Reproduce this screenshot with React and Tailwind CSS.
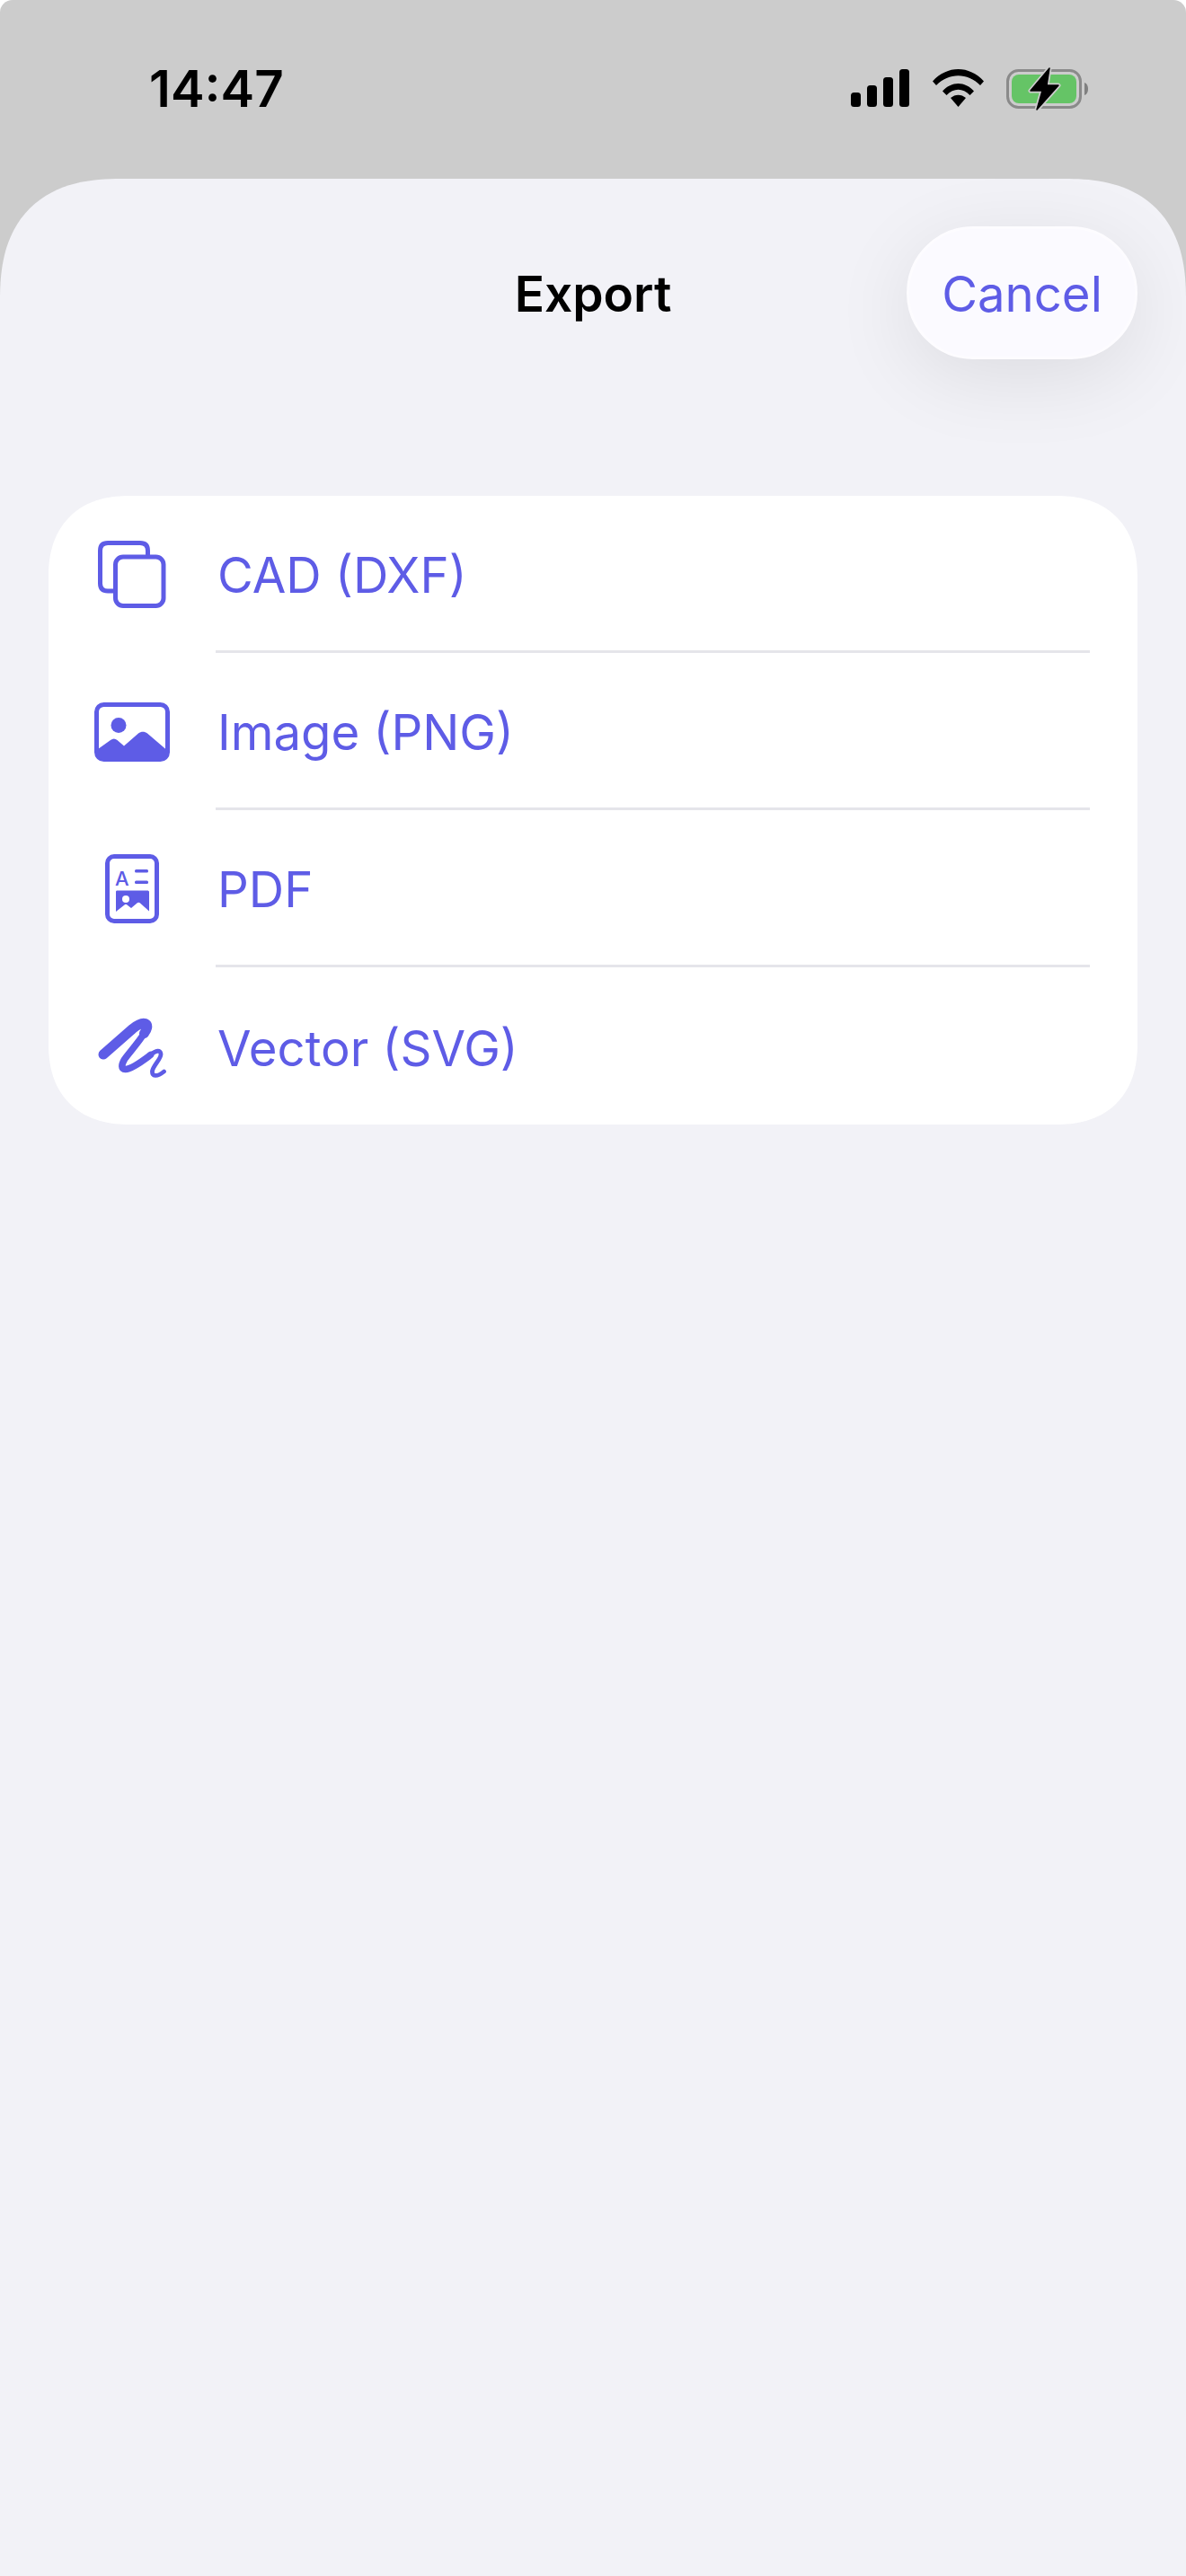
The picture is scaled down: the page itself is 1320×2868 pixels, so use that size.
const INK = "#5e5ce6";

function Signal() {
  return (
    <svg width="66" height="42" viewBox="0 0 66 42" className="block">
      <rect x="0" y="26" width="11" height="16" rx="3.5" fill="#000" />
      <rect x="18" y="18" width="11" height="24" rx="3.5" fill="#000" />
      <rect x="36" y="9" width="11" height="33" rx="3.5" fill="#000" />
      <rect x="54" y="0" width="11" height="42" rx="3.5" fill="#000" />
    </svg>
  );
}

function Wifi() {
  return (
    <svg width="57" height="42" viewBox="0 0 57 42" className="block">
      <path d="M0 13.5 C16 -4.5 41 -4.5 57 13.5 L53 18 C39 3.5 18 3.5 4 18 Z" fill="#000" />
      <path d="M11 24.5 C21 13 36 13 46 24.5 L41.5 29 C33.5 20.5 23.5 20.5 15.5 29 Z" fill="#000" />
      <path d="M20 32 C25 27.5 32 27.5 37 32 L28.5 42 Z" fill="#000" />
    </svg>
  );
}

function Battery() {
  return (
    <svg width="92" height="48" viewBox="0 0 92 48" className="block">
      <rect x="1.5" y="3.5" width="81" height="41" rx="12" fill="none" stroke="#8a8a8a" strokeWidth="3" />
      <rect x="6" y="8" width="72" height="32" rx="8" fill="#65c466" />
      <path d="M87 17 C90 18 91 21 91 24 C91 27 90 30 87 31 Z" fill="#808080" />
      <path d="M48 1 L27 26 L40 26 L34 47 L58 20 L45 20 Z" fill="#000" stroke="#cccccc" strokeWidth="5" strokeLinejoin="round" paintOrder="stroke" />
      <path d="M48 1 L27 26 L40 26 L34 47 L58 20 L45 20 Z" fill="#000" stroke="#000" strokeWidth="1.5" strokeLinejoin="round" />
    </svg>
  );
}

function CopyIcon() {
  return (
    <svg width="76" height="76" viewBox="0 0 76 76" className="block">
      <path d="M17 56 H11 C5.500 56 2.500 53 2.500 47.500 V11 C2.500 5.500 5.500 2.500 11 2.500 H47 C52.500 2.500 55.500 5.500 55.500 11 V16.500" fill="none" stroke={INK} strokeWidth="5" />
      <rect x="19.500" y="18" width="53.500" height="54.500" rx="8.500" fill="none" stroke={INK} strokeWidth="5" />
    </svg>
  );
}

function ImageIcon() {
  return (
    <svg width="84" height="66" viewBox="0 0 84 66" className="block">
      <rect x="2.500" y="2.500" width="79" height="61" rx="8" fill="none" stroke={INK} strokeWidth="5" />
      <circle cx="27" cy="25.500" r="8.500" fill={INK} />
      <path d="M4 52 L18 42 C20.500 40 23 40 25.500 42 L33 48.500 L49 34.500 C52 32 56 32 59 34.500 L80 52.500 V58 C80 61 78 63 75 63 H9 C6 63 4 61 4 58 Z" fill={INK} />
    </svg>
  );
}

function DocIcon() {
  return (
    <svg width="60" height="78" viewBox="0 0 60 78" className="block">
      <rect x="2.500" y="2.500" width="55" height="72" rx="7.500" fill="none" stroke={INK} strokeWidth="5" />
      <text x="11" y="35" fontFamily="Inter, sans-serif" fontSize="22" fontWeight="500" fill={INK}>A</text>
      <rect x="33" y="17" width="15" height="3.500" rx="1.500" fill={INK} />
      <rect x="33" y="29.500" width="15" height="3.500" rx="1.500" fill={INK} />
      <path d="M12 42 C12 41 12.500 40.500 13.500 40.500 H47 C48 40.500 49 41 49 42 V63.500 L39 54.500 C38 53.500 36.500 53.500 35.500 54.500 L29 60 L24.500 56.500 C23.500 55.500 22.500 55.500 21.500 56.500 L12 64 Z" fill={INK} />
      <circle cx="23" cy="50" r="4" fill="#fff" />
    </svg>
  );
}

function SquiggleIcon() {
  return (
    <svg width="78" height="70" viewBox="-1.5 -2.500 78 70" className="block">
      <path d="M5.500 41.500 L38 13 C44 8 49 6 52 7 C56 9 54 14 51 18" fill="none" stroke={INK} strokeWidth="11" strokeLinecap="round" strokeLinejoin="round" />
      <path d="M51 18 C44 29 33 41 29 47 C25.500 53 25 58 30 58 C38 57.500 50 48 58 42" fill="none" stroke={INK} strokeWidth="7.500" strokeLinecap="round" />
      <path d="M58 42 C64 37 69 36 69.500 41 C70 46 61 54 60 60 C59.500 66 65 67 73 60.500" fill="none" stroke={INK} strokeWidth="4.800" strokeLinecap="round" />
    </svg>
  );
}

const rows = [
  { label: "CAD (DXF)", Icon: CopyIcon },
  { label: "Image (PNG)", Icon: ImageIcon },
  { label: "PDF", Icon: DocIcon },
  { label: "Vector (SVG)", Icon: SquiggleIcon },
];

export default function App() {
  return (
    <div className="h-[2868px] w-[1320px] bg-white font-['Inter',sans-serif]">
      <div className="flex h-full flex-col rounded-t-[14px] bg-[#cccccc]">
        <div className="flex h-[199px] shrink-0 items-start justify-between pl-[166px] pr-[108px] pt-[67px]">
          <span className="text-[56.5px] font-semibold leading-[64px] text-black">14:47</span>
          <div className="flex items-start gap-[25px] pt-[10px]">
            <Signal />
            <Wifi />
            <div className="-mt-[2px]"><Battery /></div>
          </div>
        </div>
        <div className="flex-1 rounded-t-[135px] bg-[#f2f2f7] px-[54px] pt-[53px] [corner-shape:superellipse(1.3)]">
          <div className="grid grid-cols-[1fr_auto_1fr] items-center">
            <div />
            <span className="pt-[2px] text-[55px] font-semibold leading-[60px] text-black">Export</span>
            <div className="flex justify-end">
              <div className="flex h-[148px] w-[257px] items-center justify-center rounded-[74px] border-[3px] border-[#fdfcff] bg-[#fbfaff] pt-[2px] text-[54.5px] leading-[60px] text-[#5e5ce6] shadow-[0_20px_90px_rgba(0,0,0,0.09)]">
                Cancel
              </div>
            </div>
          </div>
          <div className="mt-[152px] overflow-hidden rounded-[90px] bg-white [corner-shape:superellipse(1.2)]">
            {rows.map(({ label, Icon }, i) => (
              <div key={label} className="flex h-[175px] items-stretch">
                <div className="flex w-[186px] shrink-0 items-center justify-center">
                  <Icon />
                </div>
                <div className={i < 3 ? "mr-[53px] flex flex-1 items-center border-b-[3px] border-[#e5e5ea] pl-[2px] pt-[6px] text-[54.5px] text-[#5e5ce6]" : "mr-[53px] flex flex-1 items-center pl-[2px] pt-[6px] text-[54.5px] text-[#5e5ce6]"}>
                  {label}
                </div>
              </div>
            ))}
          </div>
        </div>
      </div>
    </div>
  );
}
